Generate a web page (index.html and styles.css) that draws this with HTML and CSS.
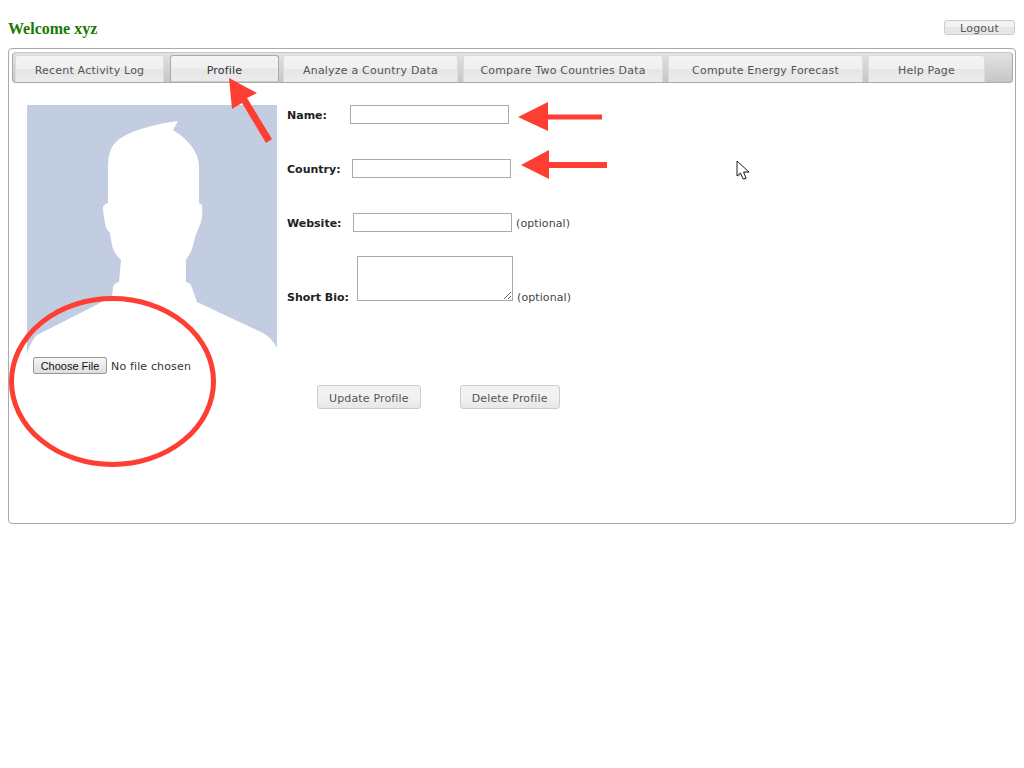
FILE: index.html
```html
<!DOCTYPE html>
<html lang="en">
<head>
  <meta charset="UTF-8">
  <meta name="viewport" content="width=device-width, initial-scale=1.0">
  <title>Profile</title>
  <link rel="stylesheet" href="styles.css">
</head>
<body>
  <div class="top">
    <h2 class="welcome">Welcome xyz</h2>
    <button class="logout" type="button">Logout</button>
  </div>

  <div class="panel">
    <ul class="tabs">
      <li class="tab">Recent Activity Log</li>
      <li class="tab active">Profile</li>
      <li class="tab">Analyze a Country Data</li>
      <li class="tab">Compare Two Countries Data</li>
      <li class="tab">Compute Energy Forecast</li>
      <li class="tab">Help Page</li>
    </ul>

    <div class="content">
      <div class="photo-col">
        <svg class="photo" width="250" height="250" viewBox="27 105 250 250">
          <defs>
            <pattern id="weave" width="4" height="4" patternUnits="userSpaceOnUse">
              <rect width="4" height="4" fill="#c4cee2"/>
              <path d="M0 0h1v1H0zM2 2h1v1H2z" fill="#bac5db"/>
            </pattern>
          </defs>
          <rect x="27" y="105" width="250" height="250" fill="url(#weave)"/>
          <path fill="#fff" d="M178 121Q176 125 173 130Q186 138 192 147Q198 155 199 165L199 203 202 205Q203 215 201 222Q197 232 195 237Q193 250 186 260L186 282Q190 283 191 285L197 302 263 333Q272 338 277 348L277 355 27 355 28 350Q32 340 37 335L112 297 113 287Q114 283 119 282L121 260Q113 252 112 245Q110 235 110 233Q105 228 105 223Q103 212 103 207Q104 204 108 203L108 165Q108 148 118 140Q135 127 178 121Z"/>
        </svg>
        <input class="file" type="file">
      </div>

      <form class="form">
        <div class="row">
          <label class="label w-name">Name:</label>
          <input class="field" type="text">
        </div>
        <div class="row">
          <label class="label w-country">Country:</label>
          <input class="field" type="text">
        </div>
        <div class="row">
          <label class="label w-website">Website:</label>
          <input class="field" type="text">
          <span class="hint">(optional)</span>
        </div>
        <div class="row row-bio">
          <label class="label w-bio">Short Bio:</label>
          <textarea class="bio"></textarea>
          <span class="hint">(optional)</span>
        </div>
        <div class="actions">
          <button class="action" type="button">Update Profile</button>
          <button class="action" type="button">Delete Profile</button>
        </div>
      </form>
    </div>
  </div>

  <!-- red marks drawn on top of the screenshot -->
  <svg class="marks" width="1024" height="768" viewBox="0 0 1024 768">
    <g fill="#fe3d33">
      <path d="M229 78 257 93 247 98 272 139 266 143 242 103 232 109Z"/>
      <path d="M518 117 548 102 548 114.500 602 114.500 602 119.500 548 119.500 548 131Z"/>
      <path d="M521 165 549 150 549 162 607 162 607 168 549 168 549 179Z"/>
    </g>
    <ellipse cx="112.500" cy="381.500" rx="101" ry="83" fill="none" stroke="#fe3d33" stroke-width="5"/>
    <path d="M738 162V177L741.500 174 744 180 747 179 744.500 173H750Z" fill="#000" opacity="0.25"/>
    <path d="M737 161V176L740.500 173 743 179 746 178 743.500 172H749Z" fill="#fff" stroke="#222" stroke-width="1"/>
  </svg>
</body>
</html>
```

FILE: styles.css
```css
body { margin: 0; padding: 20px 8px 0; font-family: "DejaVu Sans", Verdana, sans-serif; font-size: 11px; color: #333; background: #fff; }

.top { display: flex; justify-content: space-between; align-items: flex-start; height: 28px; }
.welcome { margin: 0; font-family: "Liberation Serif", serif; font-size: 16px; line-height: 18px; font-weight: bold; color: #1a7a00; }
.logout { width: 71px; height: 15px; margin-right: 1px; padding: 1px 0 0; border: 1px solid #ccc; border-radius: 3px; background: linear-gradient(#f2f2f2 50%, #e6e6e6 50%); font: 11px/13px "DejaVu Sans", sans-serif; color: #555; letter-spacing: 0.2px; }

.panel { width: 1001px; height: 468px; padding: 3px 2px 3px 3px; border: 1px solid #aaa; border-radius: 4px; }
.tabs { display: grid; grid-template-columns: 149px 109px 175px 200px 195px 117px; column-gap: 5px; height: 27px; margin: 0; padding: 2px 0 0 2px; list-style: none; border: 1px solid #aaa; border-top-color: #c8c8c8; border-radius: 4px; background: linear-gradient(#e2e2e2, #c6c6c6); letter-spacing: 0.2px; }
.tab { height: 27px; border: 1px solid #dcdcdc; border-bottom: 0; border-radius: 3px 3px 0 0; box-sizing: border-box; text-align: center; line-height: 30px; color: #555; background: linear-gradient(#f4f4f4, #f0f0f0 48%, #e6e6e6 52%, #ececec); }
.tab.active { margin: 0 -1px 0 1px; border: 1px solid #aaa; border-bottom-color: #ccc; color: #333; }

.content { display: flex; padding: 22px 0 0 15px; }
.photo-col { width: 260px; }
.photo { display: block; }
.file { display: block; margin: 2px 0 0 6px; width: 180px; height: 17px; font: 11px "DejaVu Sans", sans-serif; color: #333; letter-spacing: 0.15px; }
.file::file-selector-button { width: 74px; height: 17px; padding: 0; margin-right: 4px; border: 1px solid #999; border-radius: 2px; background: linear-gradient(#f6f6f6, #dedede); font: 11px "Liberation Sans", sans-serif; letter-spacing: 0; color: #111; }

.row { display: flex; align-items: center; height: 19px; margin-bottom: 35px; }
.row-bio { height: 45px; margin: -11px 0 0; align-items: flex-end; }
.label { padding-top: 2px; font-weight: bold; color: #222; }
.w-name { width: 63px; }
.w-country { width: 65px; }
.w-website { width: 66px; }
.w-bio { width: 70px; line-height: 14px; margin-bottom: -4px; padding-top: 0; }
.field { width: 159px; height: 19px; box-sizing: border-box; padding: 1px 2px; border: 1px solid #aaa; border-radius: 0; }
.bio { width: 156px; height: 45px; box-sizing: border-box; margin: 0; padding: 2px; border: 1px solid #aaa; border-radius: 0; }
.hint { margin-left: 4px; padding-top: 2px; color: #444; letter-spacing: 0.1px; }
.row-bio .hint { margin-bottom: -4px; padding-top: 0; line-height: 14px; }

.actions { display: flex; gap: 39px; margin: 84px 0 0 30px; }
.action { height: 24px; padding: 2px 11px 0; border: 1px solid #ccc; border-radius: 3px; background: linear-gradient(#f2f2f2 50%, #e6e6e6); font: 11px "DejaVu Sans", sans-serif; color: #555; letter-spacing: 0.15px; }

.marks { position: absolute; left: 0; top: 0; pointer-events: none; }
```
